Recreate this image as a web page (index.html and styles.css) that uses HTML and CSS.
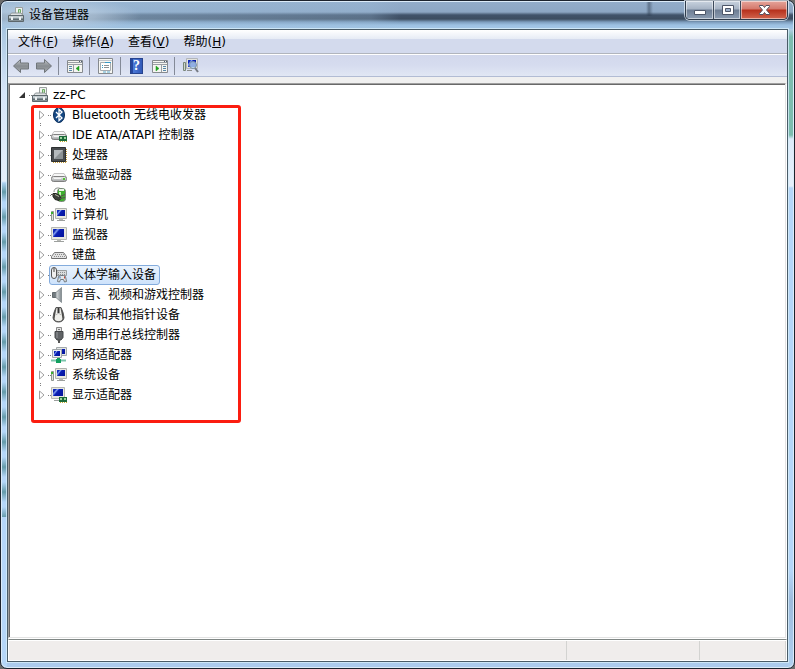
FILE: index.html
```
<!DOCTYPE html>
<html lang="zh-CN">
<head>
  <meta charset="UTF-8" />
  <meta name="viewport" content="width=device-width, initial-scale=1.0"/>
  <title>设备管理器</title>
  <link rel="stylesheet" href="styles.css">
</head>
<body>
  <!-- shared icons -->
  <svg class="defs" width="0" height="0" aria-hidden="true">
    <defs>
      <linearGradient id="screen" x1="0" y1="0" x2="1" y2=".6">
        <stop offset="0" stop-color="#1a3fd0"/><stop offset=".2" stop-color="#0a20b0"/>
        <stop offset=".35" stop-color="#7f9df0"/><stop offset=".5" stop-color="#0a1fb4"/><stop offset="1" stop-color="#0616a0"/>
      </linearGradient>
      <linearGradient id="metal" x1="0" y1="0" x2="0" y2="1">
        <stop offset="0" stop-color="#f6f6f6"/><stop offset="1" stop-color="#9c9fa1"/>
      </linearGradient>
      <linearGradient id="arrow" x1="0" y1="0" x2="0" y2="1">
        <stop offset="0" stop-color="#c3c6c9"/><stop offset=".5" stop-color="#878c91"/><stop offset="1" stop-color="#a9adb0"/>
      </linearGradient>
      <linearGradient id="cone" x1="0" y1="0" x2="1" y2="0">
        <stop offset="0" stop-color="#dfe3e5"/><stop offset="1" stop-color="#7e878c"/>
      </linearGradient>
    </defs>
    <symbol id="i-manager" viewBox="0 0 16 16">
      <path d="M7.500.5h7v9h-7z" fill="#f0f2f1" stroke="#9aa09f"/>
      <path d="M10.500 2.500h2v4h-2z" fill="#c7e5c0" stroke="#6cab64"/>
      <path d="M1.500 8.500l2-2.500h9.500l2 2.500z" fill="#dfe2e3" stroke="#8e9698"/>
      <path d="M.5 8.500h15v6H.5z" fill="#87949a" stroke="#5c676c"/>
      <path d="M1 9h14v2H1z" fill="#c2cbcf"/>
      <path d="M1 12.500h14" stroke="#5f6b70"/>
      <path d="M3 10h2v3H3zM11 10h2v3h-2z" fill="#eef1f2"/>
    </symbol>
    <symbol id="i-monitor" viewBox="0 0 16 16">
      <path d="M.5.5h15v12H.5z" fill="#e8e8e0" stroke="#b6b8b3"/>
      <path d="M2 2h11v8H2z" fill="url(#screen)"/>
      <path d="M6 12h4v2H6z" fill="#b8bab6"/>
      <path d="M3 14.500h10" stroke="#9da09e"/>
    </symbol>
    <symbol id="i-computer" viewBox="0 0 16 16">
      <path d="M4.500 1.500h11v10h-11z" fill="#e8e8e0" stroke="#b0b2ae"/>
      <path d="M6 3h8v6H6z" fill="url(#screen)"/>
      <path d="M8 11h4v2H8z" fill="#b8bab6"/>
      <path d="M6 13.500h8" stroke="#9da09e"/>
      <path d="M.5 4.500h2v9h-2z" fill="#dfe3df" stroke="#8d958e"/>
      <path d="M0 5h2v2H0z" fill="#38b32c"/>
    </symbol>
    <symbol id="i-drive" viewBox="0 0 16 16">
      <path d="M3 5.500h10l2.500 4H.5z" fill="#f7f7f7" stroke="#c4c4c4"/>
      <rect x=".5" y="8.500" width="15" height="5" rx="2" fill="url(#metal)" stroke="#808080"/>
      <path d="M3 10.500h7" stroke="#f4f4f4"/>
      <path d="M12 10h2v2h-2z" fill="#53c136"/>
    </symbol>
    <symbol id="i-chip" viewBox="0 0 8 6">
      <path d="M0 0h8v5H0z" fill="#1c6b3a"/>
      <path d="M1 1h2v2H1zM5 1h2v2H5z" fill="#9cd49c"/>
      <path d="M1 5.500h7" stroke="#c8ad35" stroke-dasharray="1 1"/>
    </symbol>
    <symbol id="i-closed" viewBox="0 0 10 10">
      <path d="M3.500 1v8l4.500-4z" fill="#fff" stroke="#a0a0a0"/>
    </symbol>
  </svg>

  <div class="window">
    <header class="titlebar">
      <svg class="icon"><use href="#i-manager"/></svg>
      <h1>设备管理器</h1>
      <div class="controls">
        <button class="control min" aria-label="最小化">
          <svg width="13" height="13" viewBox="0 0 13 13"><path d="M1.500 6.500h11v4h-11z" fill="#fff" stroke="#4d5668"/></svg>
        </button>
        <button class="control max" aria-label="最大化">
          <svg width="13" height="13" viewBox="0 0 13 13"><path d="M1.500 1.500h11v9h-11z" fill="#fff" stroke="#4d5668"/><path d="M4.500 4.500h5v3h-5z" fill="#9db0c9" stroke="#4d5668"/></svg>
        </button>
        <button class="control close" aria-label="关闭">
          <svg width="13" height="13" viewBox="0 0 13 13"><path d="M1.500 1.500h3.500l1.500 2 1.500-2h3.500v1l-3 3.500 3 3.500v1H8l-1.500-2-1.500 2H1.500v-1l3-3.500-3-3.500z" fill="#fff" stroke="#54505e"/></svg>
        </button>
      </div>
    </header>

    <div class="client">
      <nav class="menubar">
        <button>文件(<u>F</u>)</button>
        <button>操作(<u>A</u>)</button>
        <button>查看(<u>V</u>)</button>
        <button>帮助(<u>H</u>)</button>
      </nav>

      <div class="toolbar">
        <button aria-label="后退">
          <svg class="icon" viewBox="0 0 16 16"><path d="M.5 8l7-6.500v3.500h8v6h-8v3.500z" fill="url(#arrow)" stroke="#70767b"/></svg>
        </button>
        <button aria-label="前进">
          <svg class="icon" viewBox="0 0 16 16"><path d="M15.500 8l-7-6.500v3.500h-8v6h8v3.500z" fill="url(#arrow)" stroke="#70767b"/></svg>
        </button>
        <span class="sep"></span>
        <button aria-label="显示/隐藏控制台树">
          <svg class="icon" viewBox="0 0 16 16">
            <path d="M.5 2.500h15v12H.5z" fill="#f5f5f1" stroke="#868a8e"/>
            <path d="M1 4.500h14M1 6.500h14M6.500 7v7" stroke="#9a9ea3"/>
            <path d="M12 3.500h3" stroke="#4e5c70" stroke-dasharray="1 1"/>
            <path d="M2 8.500h3M2 10.500h3M2 12.500h3" stroke="#5887a8"/>
            <path d="M12 8v5l-3-2.500z" fill="#1fa01e" stroke="#1fa01e" stroke-width=".5"/>
          </svg>
        </button>
        <span class="sep"></span>
        <button aria-label="属性">
          <svg class="icon" viewBox="0 0 16 16">
            <path d="M.5.5h14v15H.5z" fill="#f7f7f3" stroke="#868a8e"/>
            <path d="M1 2.500h13" stroke="#c2c7ce"/>
            <path d="M2.500 4.500h10v8h-10z" fill="#fff" stroke="#a5abb0"/>
            <path d="M7 4.500h6M4 7.500h1M4 9.500h1" stroke="#389ac7"/>
            <path d="M6 7.500h5M6 9.500h5" stroke="#8b9095"/>
            <path d="M5 14h3M9 14h3" stroke="#57a9cf"/>
          </svg>
        </button>
        <span class="sep"></span>
        <button class="help" aria-label="帮助"><span>?</span></button>
        <button aria-label="显示/隐藏操作窗格">
          <svg class="icon" viewBox="0 0 16 16">
            <path d="M.5 2.500h15v12H.5z" fill="#f5f5f1" stroke="#868a8e"/>
            <path d="M1 4.500h14M1 6.500h14M9.500 7v7" stroke="#9a9ea3"/>
            <path d="M12 3.500h3" stroke="#4e5c70" stroke-dasharray="1 1"/>
            <path d="M11 8.500h3M11 10.500h3M11 12.500h3" stroke="#5887a8"/>
            <path d="M4 8v5l3-2.500z" fill="#1fa01e" stroke="#1fa01e" stroke-width=".5"/>
          </svg>
        </button>
        <span class="sep"></span>
        <button aria-label="扫描检测硬件改动">
          <svg class="icon" viewBox="0 0 16 16">
            <path d="M3.500.5h11v10h-11z" fill="#e4e4dc" stroke="#b3b6ba"/>
            <path d="M5 2h8v7H5z" fill="url(#screen)"/>
            <path d="M.5 4.500h2v8h-2z" fill="#cdd6cd" stroke="#788578"/>
            <path d="M4 12.500h5" stroke="#8b8e8c"/>
            <circle cx="10" cy="7" r="3.500" fill="#bfe0f7" fill-opacity=".75" stroke="#7890a8"/>
            <path d="M12 10l3 4" stroke="#767b83" stroke-width="2"/>
          </svg>
        </button>
      </div>

      <main class="tree">
        <div class="row">
          <button class="expander" aria-label="折叠"><svg viewBox="0 0 10 10"><path d="M8 2v6H2z" fill="#333"/></svg></button>
          <span class="link"></span>
          <button class="item"><svg class="icon"><use href="#i-manager"/></svg>zz-PC</button>
        </div>
        <ul>
          <li class="row">
            <button class="expander" aria-label="展开"><svg><use href="#i-closed"/></svg></button>
            <span class="link"></span>
            <button class="item">
              <svg class="icon" viewBox="0 0 16 16">
                <ellipse cx="8" cy="8" rx="5.500" ry="7.500" fill="#164a86" stroke="#0b2f5c"/>
                <path d="M5 5l6 6-3 2.500v-11l3 2.500-6 6" fill="none" stroke="#fff" stroke-width="1.300"/>
              </svg>Bluetooth 无线电收发器
            </button>
          </li>
          <li class="row">
            <button class="expander" aria-label="展开"><svg><use href="#i-closed"/></svg></button>
            <span class="link"></span>
            <button class="item">
              <svg class="icon" viewBox="0 0 16 16">
                <use href="#i-drive" y="-1" width="16" height="16"/>
                <use href="#i-chip" x="8" y="9" width="8" height="6"/>
              </svg>IDE ATA/ATAPI 控制器
            </button>
          </li>
          <li class="row">
            <button class="expander" aria-label="展开"><svg><use href="#i-closed"/></svg></button>
            <span class="link"></span>
            <button class="item">
              <svg class="icon" viewBox="0 0 16 16">
                <path d="M2 15.500h14M15.500 2v13" stroke="#c49a35" stroke-dasharray="1 1"/>
                <path d="M.5.5h14v14H.5z" fill="#474b4e" stroke="#2c2f31"/>
                <path d="M3 3h9v9H3z" fill="#b4b9bc"/>
                <path d="M3 12l9-9v9z" fill="#8c9295"/>
              </svg>处理器
            </button>
          </li>
          <li class="row">
            <button class="expander" aria-label="展开"><svg><use href="#i-closed"/></svg></button>
            <span class="link"></span>
            <button class="item"><svg class="icon"><use href="#i-drive" y="1"/></svg>磁盘驱动器</button>
          </li>
          <li class="row">
            <button class="expander" aria-label="展开"><svg><use href="#i-closed"/></svg></button>
            <span class="link"></span>
            <button class="item">
              <svg class="icon" viewBox="0 0 16 16">
                <path d="M3 5c0-5 6-5 8-2" fill="none" stroke="#8a8e8a"/>
                <rect x="6.500" y="1.500" width="8" height="13" rx="3" fill="#3fae2f" stroke="#7b857b"/>
                <path d="M8 3h5" stroke="#eef5ea" stroke-width="2"/>
                <path d="M9 5v5" stroke="#c6f5b4" stroke-width="2"/>
                <path d="M2 6.500h3l4 2 1 3-2 2-4-1-2-3z" fill="#3b3f3a" stroke="#23261f"/>
                <path d="M0 7.500h3M9 9.500l5-2M9 11.500l5-1" stroke="#56534c"/>
                <path d="M4 7.500l4 2" stroke="#b5b6a2"/>
              </svg>电池
            </button>
          </li>
          <li class="row">
            <button class="expander" aria-label="展开"><svg><use href="#i-closed"/></svg></button>
            <span class="link"></span>
            <button class="item"><svg class="icon"><use href="#i-computer"/></svg>计算机</button>
          </li>
          <li class="row">
            <button class="expander" aria-label="展开"><svg><use href="#i-closed"/></svg></button>
            <span class="link"></span>
            <button class="item"><svg class="icon"><use href="#i-monitor"/></svg>监视器</button>
          </li>
          <li class="row">
            <button class="expander" aria-label="展开"><svg><use href="#i-closed"/></svg></button>
            <span class="link"></span>
            <button class="item">
              <svg class="icon" viewBox="0 0 16 16">
                <path d="M3.500 5.500h9l3 4v2H.5v-2z" fill="#e2e2e2" stroke="#777"/>
                <path d="M4 7.500h9M3 9.500h11" stroke="#8c8c8c" stroke-dasharray="1 1"/>
                <path d="M1 11.500h14" stroke="#6d6d6d"/>
              </svg>键盘
            </button>
          </li>
          <li class="row">
            <button class="expander" aria-label="展开"><svg><use href="#i-closed"/></svg></button>
            <span class="link"></span>
            <button class="item selected">
              <svg class="icon" viewBox="0 0 16 16">
                <path d="M6 3.500h9.500v5H6z" fill="#d9dbdc" stroke="#999d9f"/>
                <path d="M7 5.500h8M7 7.500h8" stroke="#8b9093" stroke-dasharray="1 1"/>
                <rect x=".5" y=".5" width="5" height="11" rx="2.500" fill="#efefef" stroke="#555"/>
                <path d="M3 1v4" stroke="#444"/>
                <path d="M6.500 14.500l1-5 2-1h3l2 1 1 5-2 .5-1-2.500h-3l-1 2.500z" fill="#e2e6e9" stroke="#72797e"/>
                <path d="M8.500 10.500h1" stroke="#3274bd" stroke-width="2"/>
                <path d="M13 10.500h1" stroke="#c74636" stroke-width="2"/>
              </svg>人体学输入设备
            </button>
          </li>
          <li class="row">
            <button class="expander" aria-label="展开"><svg><use href="#i-closed"/></svg></button>
            <span class="link"></span>
            <button class="item">
              <svg class="icon" viewBox="0 0 16 16">
                <path d="M1.500 5.500H5v5H1.500z" fill="#727b80" stroke="#626a6e"/>
                <path d="M5 5.500L10.500.5v15L5 10.500z" fill="url(#cone)" stroke="#8b9397"/>
              </svg>声音、视频和游戏控制器
            </button>
          </li>
          <li class="row">
            <button class="expander" aria-label="展开"><svg><use href="#i-closed"/></svg></button>
            <span class="link"></span>
            <button class="item">
              <svg class="icon" viewBox="0 0 16 16">
                <path d="M5 .5h5l2 5 1 5c0 6-11 6-11 0l1-5z" fill="#4a4a48" stroke="#555"/>
                <path d="M5.500 1h4l1 5 1 6c-1 3-7 3-8 0l1-6z" fill="#efefeb"/>
                <path d="M7.500 1v5" stroke="#333" stroke-width="2"/>
                <path d="M5 8c2-2 3-2 5 0" fill="none" stroke="#aaa"/>
              </svg>鼠标和其他指针设备
            </button>
          </li>
          <li class="row">
            <button class="expander" aria-label="展开"><svg><use href="#i-closed"/></svg></button>
            <span class="link"></span>
            <button class="item">
              <svg class="icon" viewBox="0 0 16 16">
                <path d="M5.500.5h5v4h-5z" fill="#e2e2e2" stroke="#888"/>
                <path d="M7 2h2v1H7z" fill="#777"/>
                <path d="M4 4.500h8v6L10 13H6l-2-2.500z" fill="#606366" stroke="#45484a"/>
                <path d="M6 5v6" stroke="#93979a"/>
                <path d="M8 13v3" stroke="#555" stroke-width="2"/>
              </svg>通用串行总线控制器
            </button>
          </li>
          <li class="row">
            <button class="expander" aria-label="展开"><svg><use href="#i-closed"/></svg></button>
            <span class="link"></span>
            <button class="item">
              <svg class="icon" viewBox="0 0 16 16">
                <path d="M5.500.5h10v8h-10z" fill="#e3e6e6" stroke="#a2a8aa"/>
                <path d="M7 2h7v5H7z" fill="url(#screen)"/>
                <path d="M1.500 2.500h9v8h-9z" fill="#eceeed" stroke="#a2a8aa"/>
                <path d="M3 4h6v5H3z" fill="url(#screen)"/>
                <path d="M0 13.500h15" stroke="#7cc4ac" stroke-width="2"/>
                <path d="M6 11h3v1h1v4H5v-4h1z" fill="#12a05f"/>
              </svg>网络适配器
            </button>
          </li>
          <li class="row">
            <button class="expander" aria-label="展开"><svg><use href="#i-closed"/></svg></button>
            <span class="link"></span>
            <button class="item"><svg class="icon"><use href="#i-computer"/></svg>系统设备</button>
          </li>
          <li class="row">
            <button class="expander" aria-label="展开"><svg><use href="#i-closed"/></svg></button>
            <span class="link"></span>
            <button class="item">
              <svg class="icon" viewBox="0 0 16 16">
                <path d="M.5.5h13v11H.5z" fill="#e8e8e0" stroke="#b6b8b3"/>
                <path d="M2 2h10v7H2z" fill="url(#screen)"/>
                <path d="M3 13.500h6" stroke="#9da09e"/>
                <use href="#i-chip" x="8" y="10" width="8" height="6"/>
              </svg>显示适配器
            </button>
          </li>
        </ul>
        <div class="highlight"></div>
      </main>

      <footer class="statusbar">
        <span></span>
        <span></span>
        <span></span>
      </footer>
    </div>
  </div>
</body>
</html>
```
FILE: styles.css
```
* {
  box-sizing: border-box;
}
body {
  margin: 0;
  background: #6b6b6b;
  color: #000;
  font: 12px/20px "DejaVu Sans", "Noto Sans CJK SC", sans-serif;
}
button {
  margin: 0;
  padding: 0;
  border: 0;
  background: none;
  color: inherit;
  font: inherit;
}
svg {
  display: block;
}
.defs {
  position: absolute;
}
.icon {
  width: 16px;
  height: 16px;
  flex: none;
}

/* glass frame */
.window {
  display: flex;
  flex-direction: column;
  min-height: 100vh;
  padding: 0 6px 6px;
  border: 1px solid #1c222c;
  border-radius: 7px;
  box-shadow: inset 0 0 0 1px #dcebf8;
  background:
    radial-gradient(ellipse 90px 18px at 50px 14px, rgba(190, 208, 226, .9), rgba(190, 208, 226, .6) 50%, transparent) no-repeat,
    linear-gradient(90deg, transparent 645px, rgba(45, 60, 80, .5) 648px, transparent 652px) 0 0 / 100% 15px no-repeat,
    linear-gradient(90deg, rgba(157, 190, 219, .6) 0, rgba(157, 190, 219, .3) 370px, transparent 400px) 0 0 / 100% 28px no-repeat,
    linear-gradient(#93adca 0, #8da6c3 11px, #41536a 14px, #3d4d60 18px, #7d9dbd 21px, #9dc1e2 24px, #a6c9e8 28px) 0 0 / 100% 28px no-repeat,
    repeating-linear-gradient(transparent 0, rgba(80, 140, 150, .8) 10px, transparent 20px, transparent 25px) 0 181px / 6px 335px no-repeat,
    linear-gradient(#a9c6e0 28px, #d5e5f8 90px, #e4eefa 180px, #b5d6f8 182px, #b5d6f8) 0 0 / 6px 100% no-repeat,
    linear-gradient(#b5cee6 28px, #7dbcae 36px, #7dbcae 134px, #dcebfa 138px, #e6f0fb 185px, #b5d6f8 187px, #b5d6f8 570px, #9dbbdc 600px, #b0d0f0) 100% 0 / 6px 100% no-repeat,
    #accbed;
}
.titlebar {
  display: flex;
  height: 28px;
  align-items: center;
  gap: 5px;
  padding-left: 1px;
}
.titlebar h1 {
  flex: 1;
  margin: 0;
  font-size: 12px;
  font-weight: normal;
}
.controls {
  display: flex;
  align-self: flex-start;
  height: 19px;
  border: 1px solid #2e3b4b;
  border-top: 0;
  border-radius: 0 0 5px 5px;
  box-shadow: 0 0 0 1px rgba(230, 240, 250, .7);
  overflow: hidden;
}
.control {
  display: flex;
  width: 28px;
  align-items: center;
  justify-content: center;
  border-right: 1px solid #3c495a;
  background: linear-gradient(#c9d3df 0, #a6b3c4 8px, #6d7d93 9px, #8c9db2 18px);
  box-shadow: inset 0 0 0 1px rgba(255, 255, 255, .5);
}
.control.max {
  width: 27px;
}
.control.close {
  width: 46px;
  border: 0;
  background: linear-gradient(#e6a59b 0, #d4786b 8px, #b6301c 9px, #d2654e 18px);
}

.client {
  display: flex;
  flex: 1;
  flex-direction: column;
  border: 1px solid #4a5c68;
  background: #f0f0f0;
  box-shadow: 0 0 0 1px rgba(215, 238, 250, .8);
}
.menubar {
  display: flex;
  height: 24px;
  padding-left: 3px;
  border-bottom: 1px solid #b1b5bd;
  background: linear-gradient(#fff 0, #e6ebf5 9px, #d3daed 9px);
}
.menubar button {
  padding: 0 7px;
}
.toolbar {
  display: flex;
  height: 23px;
  align-items: center;
  padding-left: 1px;
  border-top: 1px solid #fff;
  border-bottom: 1px solid #b2bcd4;
  background: linear-gradient(#d2d8ec, #d6dcef 50%, #e1e7f4);
}
.toolbar button {
  display: flex;
  width: 23px;
  height: 20px;
  align-items: center;
  justify-content: center;
}
.sep {
  width: 1px;
  height: 18px;
  margin: 0 4px 0 3px;
  background: #848a98;
}
.help span {
  width: 13px;
  height: 16px;
  border: 1px solid #27448e;
  background: linear-gradient(90deg, #2547a0 2px, #4c7ad8 2px, #3159b8);
  color: #fff;
  font: bold 14px/14px "Liberation Serif", serif;
  text-align: center;
}

/* device tree */
.tree {
  position: relative;
  flex: 1;
  margin: 6px 1px 1px 0;
  padding: 1px 0 0 8px;
  border: 1px solid #e3e3e3;
  border-top-color: #a0a0a0;
  border-left-color: #a0a0a0;
  background: #fff;
  box-shadow: inset 1px 1px #696969, 1px 1px #fff;
}
.tree ul {
  margin: 0;
  padding: 0 0 0 19px;
  list-style: none;
}
.row {
  display: flex;
  height: 20px;
  align-items: center;
}
li.row {
  background:
    linear-gradient(#808080, #808080) 4px 0 / 1px 1px no-repeat,
    linear-gradient(#808080, #808080) 4px 18px / 1px 1px no-repeat;
}
li.row:last-child {
  background: linear-gradient(#808080, #808080) 4px 0 / 1px 1px no-repeat;
}
.expander,
.expander svg {
  width: 10px;
  height: 10px;
}
.link {
  width: 3px;
  height: 1px;
  margin: 0 -2px 0 2px;
  background: repeating-linear-gradient(90deg, #808080 0, #808080 1px, transparent 1px, transparent 2px);
}
.item {
  display: flex;
  height: 20px;
  align-items: center;
  gap: 5px;
  padding: 0 3px 0 1px;
  border: 1px solid transparent;
  border-radius: 3px;
  line-height: 18px;
  white-space: nowrap;
}
.item.selected {
  border-color: #84acdd;
  background: linear-gradient(#eaf3fd, #cde2fb);
}
.highlight {
  position: absolute;
  top: 21px;
  left: 22px;
  width: 210px;
  height: 318px;
  border: 3px solid #fb1d10;
  border-radius: 3px;
  pointer-events: none;
}

.statusbar {
  display: flex;
  height: 22px;
  border: 1px solid #fff;
  border-top-color: #808785;
  background: #f0edec;
  box-shadow: inset 0 1px #fff;
}
.statusbar span {
  width: 133px;
  margin-top: 1px;
  border-right: 1px solid #d3d3d1;
}
.statusbar span:first-child {
  flex: 1;
}
.statusbar span:last-child {
  width: 86px;
}
```
